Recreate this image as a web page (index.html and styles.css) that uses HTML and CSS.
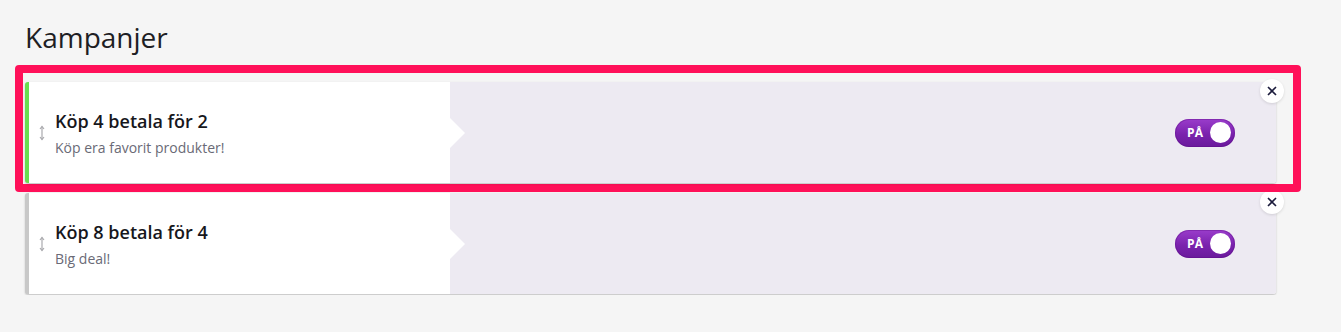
FILE: index.html
```html
<!DOCTYPE html>
<html lang="sv">
<head>
<meta charset="utf-8">
<title>Kampanjer</title>
<link rel="stylesheet" href="styles.css">
</head>
<body>
<div class="page">
  <h1 class="title">Kampanjer</h1>
  <ul class="list">
    <li class="item item--selected">
      <div class="card card--active">
        <div class="card-main">
          <svg class="handle" width="6" height="16" viewBox="0 0 6 16" aria-hidden="true">
            <line x1="3" y1="1.5" x2="3" y2="14.5"/>
            <polyline points="1,4 3,1.5 5,4"/>
            <polyline points="1,12 3,14.5 5,12"/>
          </svg>
          <div class="text">
            <div class="name">Köp 4 betala för 2</div>
            <div class="desc">Köp era favorit produkter!</div>
          </div>
        </div>
        <div class="card-side">
          <div class="toggle"><span class="toggle-label">PÅ</span><span class="knob"></span></div>
        </div>
        <button class="close" aria-label="Ta bort">
          <svg width="10" height="10" viewBox="0 0 10 10"><path d="M1 1 L9 9 M9 1 L1 9"/></svg>
        </button>
      </div>
    </li>
    <li class="item">
      <div class="card">
        <div class="card-main">
          <svg class="handle" width="6" height="16" viewBox="0 0 6 16" aria-hidden="true">
            <line x1="3" y1="1.5" x2="3" y2="14.5"/>
            <polyline points="1,4 3,1.5 5,4"/>
            <polyline points="1,12 3,14.5 5,12"/>
          </svg>
          <div class="text">
            <div class="name">Köp 8 betala för 4</div>
            <div class="desc">Big deal!</div>
          </div>
        </div>
        <div class="card-side">
          <div class="toggle"><span class="toggle-label">PÅ</span><span class="knob"></span></div>
        </div>
        <button class="close" aria-label="Ta bort">
          <svg width="10" height="10" viewBox="0 0 10 10"><path d="M1 1 L9 9 M9 1 L1 9"/></svg>
        </button>
      </div>
    </li>
  </ul>
</div>
</body>
</html>
```

FILE: styles.css
```css
html, body {
  margin: 0;
  padding: 0;
  background: #f5f5f5;
  font-family: "Open Sans", "Noto Sans", sans-serif;
}

.page {
  padding: 18px 48px 0 23px;
}

.title {
  margin: 0 0 17px 2px;
  font-size: 28px;
  line-height: 38px;
  font-weight: 400;
  color: #1e1e24;
}

.list {
  list-style: none;
  margin: 0;
  padding: 0;
}

.item {
  position: relative;
  padding: 9px 17px 1px 2px;
}

.item--selected {
  z-index: 1;
}

.item--selected::before {
  content: "";
  position: absolute;
  top: -8px;
  left: -8px;
  right: -8px;
  bottom: -8px;
  border: 8px solid #ff1059;
  border-radius: 4px;
  pointer-events: none;
}

.card {
  position: relative;
  display: flex;
  height: 101px;
  background: #ffffff;
  border-left: 4px solid #c8c8c8;
  border-radius: 3px;
  box-shadow: 0 1px 2px rgba(0, 0, 0, 0.22);
}

.card--active {
  border-left-color: #6ade4f;
}

.card-main {
  position: relative;
  width: 421px;
  display: flex;
  align-items: center;
  padding-left: 10px;
  box-sizing: border-box;
  background: #fff;
  border-radius: 3px 0 0 3px;
}

.card-main::after {
  content: "";
  position: absolute;
  right: -15px;
  top: 50%;
  margin-top: -15px;
  border-top: 15px solid transparent;
  border-bottom: 15px solid transparent;
  border-left: 15px solid #ffffff;
}

.handle {
  flex: none;
  fill: none;
  stroke: #a9a9ad;
  stroke-width: 1.2;
}

.text {
  margin-left: 10px;
  padding-top: 2px;
}

.name {
  font-size: 18px;
  line-height: 24px;
  font-weight: 600;
  color: #17171c;
}

.desc {
  margin-top: 5px;
  font-size: 14px;
  line-height: 20px;
  color: #6a6a76;
}

.card-side {
  flex: 1;
  display: flex;
  align-items: center;
  justify-content: flex-end;
  padding-right: 41px;
  background: #edeaf2;
  border-radius: 0 3px 3px 0;
}

.toggle {
  display: flex;
  align-items: center;
  justify-content: space-between;
  box-sizing: border-box;
  width: 60px;
  height: 28px;
  padding: 0 4px 0 12px;
  border-radius: 14px;
  background: linear-gradient(180deg, #9a3ccb 0%, #7a22ad 55%, #6a1a9c 100%);
  box-shadow: inset 0 0 0 1px rgba(90, 10, 130, 0.35);
}

.toggle-label {
  font-family: "Open Sans", sans-serif;
  font-size: 12px;
  font-weight: 700;
  color: #ffffff;
  letter-spacing: 0.2px;
  line-height: 1;
}

.knob {
  width: 21px;
  height: 21px;
  border-radius: 50%;
  background: #ffffff;
}

.close {
  position: absolute;
  top: -3px;
  right: -8px;
  width: 24px;
  height: 24px;
  padding: 0;
  border: none;
  border-radius: 50%;
  background: #ffffff;
  box-shadow: 0 1px 3px rgba(0, 0, 0, 0.12);
  display: flex;
  align-items: center;
  justify-content: center;
  cursor: pointer;
}

.close svg {
  fill: none;
  stroke: #1b1b3c;
  stroke-width: 1.6;
}
```
